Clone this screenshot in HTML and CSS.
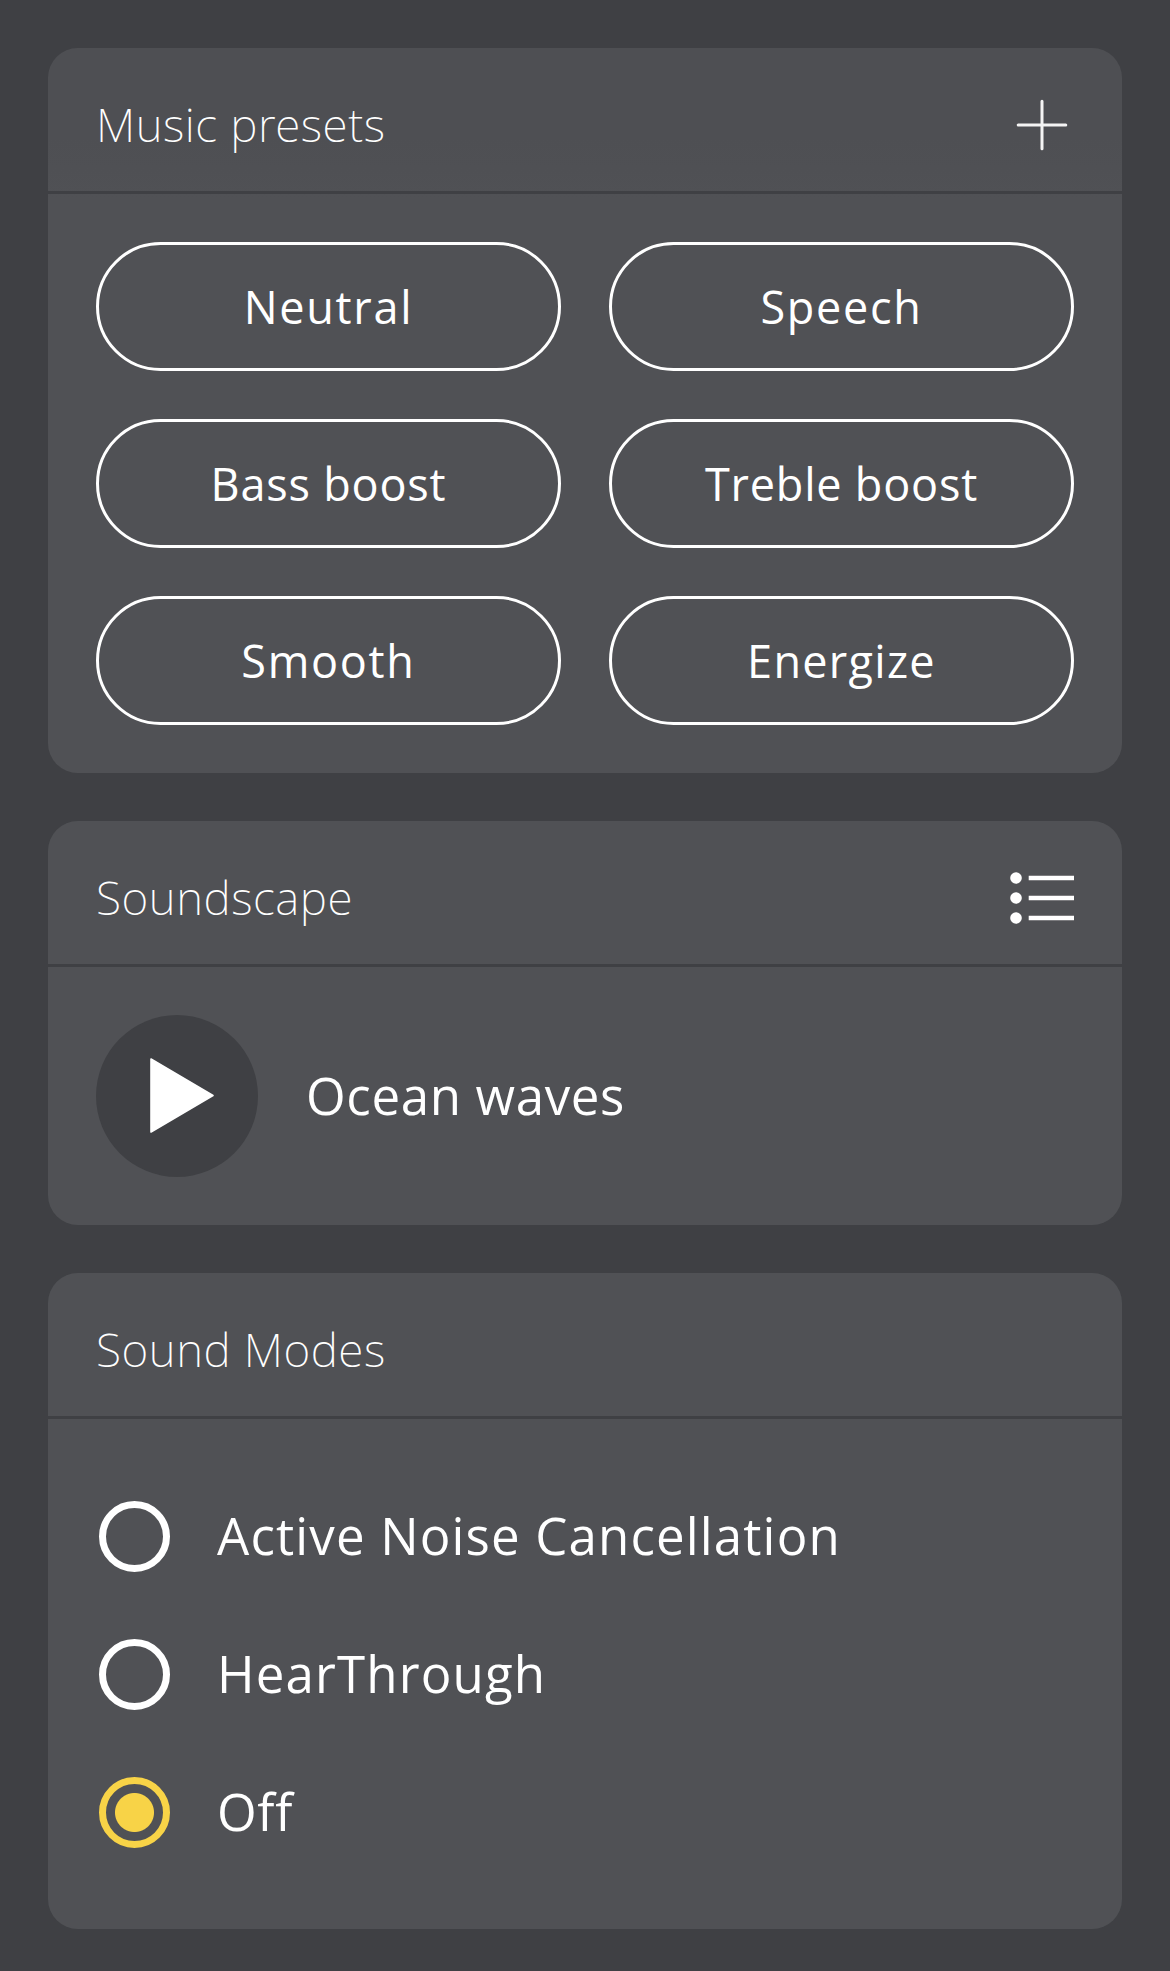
FILE: index.html
```html
<!DOCTYPE html>
<html lang="en">

<head>
    <meta charset="UTF-8">
    <meta name="viewport" content="width=device-width, initial-scale=1.0">
    <title>Sound settings</title>
    <link rel="stylesheet" href="styles.css">
</head>

<body>
    <div class="container">
        <div class="card card-top">
            <div class="header">
                <h2>Music presets</h2>
                <svg viewBox="0 0 64 52" width="64" height="52">
                    <path d="M32 2.2v47.6M8.2 26h47.6" stroke="#f4f4f4" stroke-width="3" stroke-linecap="round" />
                </svg>
            </div>
            <div class="presets">
                <button>Neutral</button>
                <button>Speech</button>
                <button class="tight">Bass boost</button>
                <button class="tight">Treble boost</button>
                <button>Smooth</button>
                <button class="energize">Energize</button>
            </div>
        </div>

        <div class="card">
            <div class="header">
                <h2>Soundscape</h2>
                <svg viewBox="0 0 64 52" width="64" height="52">
                    <g fill="#fff">
                        <circle cx="6" cy="6" r="5.8" />
                        <circle cx="6" cy="26" r="5.8" />
                        <circle cx="6" cy="46" r="5.8" />
                    </g>
                    <path d="M18.7 6H64M18.7 26H64M18.7 46H64" stroke="#fff" stroke-width="4.4" />
                </svg>
            </div>
            <div class="player">
                <button class="play" aria-label="Play">
                    <svg viewBox="0 0 162 162" width="162" height="162">
                        <path d="M55 44L117 80.5L55 117Z" fill="#fff" stroke="#fff" stroke-width="1.6" stroke-linejoin="round" />
                    </svg>
                </button>
                <span class="track">Ocean waves</span>
            </div>
        </div>

        <div class="card">
            <div class="header">
                <h2>Sound Modes</h2>
            </div>
            <div class="modes">
                <label class="mode">
                    <input type="radio" name="mode">
                    <span>Active Noise Cancellation</span>
                </label>
                <label class="mode">
                    <input type="radio" name="mode">
                    <span>HearThrough</span>
                </label>
                <label class="mode">
                    <input type="radio" name="mode" checked>
                    <span class="off">Off</span>
                </label>
            </div>
        </div>
    </div>
</body>

</html>
```
FILE: styles.css
```css
* {
    box-sizing: border-box;
}

body {
    margin: 0;
    background: #3f4044;
    color: #fff;
    font-family: "Open Sans", "Noto Sans", sans-serif;
}

.container {
    display: flex;
    flex-direction: column;
    gap: 48px;
    padding: 48px 48px 43px;
}

.card {
    background: #505155;
    border-radius: 30px;
}

.card-top {
    background: linear-gradient(#4e4f53, #4e4f53 90px, #505155 150px);
}

.header {
    display: flex;
    align-items: center;
    justify-content: space-between;
    height: 146px;
    padding: 10px 48px 0;
    border-bottom: 3px solid #3f4044;
}

h2 {
    margin: -2px 0 0;
    font-family: "Noto Sans", sans-serif;
    font-size: 46px;
    font-weight: 230;
    line-height: 60px;
    letter-spacing: 0.55px;
}

.presets {
    display: grid;
    grid-template-columns: 1fr 1fr;
    gap: 48px;
    padding: 48px;
}

.presets button {
    height: 129px;
    padding: 0;
    border: 3px solid #fff;
    border-radius: 65px;
    background: none;
    color: #fff;
    font-family: inherit;
    font-size: 45px;
    font-weight: 400;
    letter-spacing: 1.7px;
}

.presets .energize {
    letter-spacing: 1.3px;
}

.presets .tight {
    letter-spacing: 0.8px;
}

.player {
    display: flex;
    align-items: center;
    gap: 48px;
    padding: 48px;
}

.play {
    width: 162px;
    height: 162px;
    padding: 0;
    border: none;
    border-radius: 50%;
    background: #3f4044;
}

.play svg {
    display: block;
}

.track,
.mode span {
    font-size: 51px;
    font-weight: 400;
    letter-spacing: 1.15px;
    padding-bottom: 3px;
}

.track {
    letter-spacing: 0.65px;
}

.modes {
    padding: 48px;
}

.mode {
    display: flex;
    align-items: center;
    gap: 47px;
    height: 138px;
}

.mode .off {
    letter-spacing: 0.7px;
}

.mode input {
    appearance: none;
    width: 71px;
    height: 71px;
    margin: 0 0 0 3px;
    border: 7px solid #fff;
    border-radius: 50%;
}

.mode input:checked {
    border-color: #f8d347;
    background: radial-gradient(circle, #f8d347 19px, transparent 20px);
}
```
